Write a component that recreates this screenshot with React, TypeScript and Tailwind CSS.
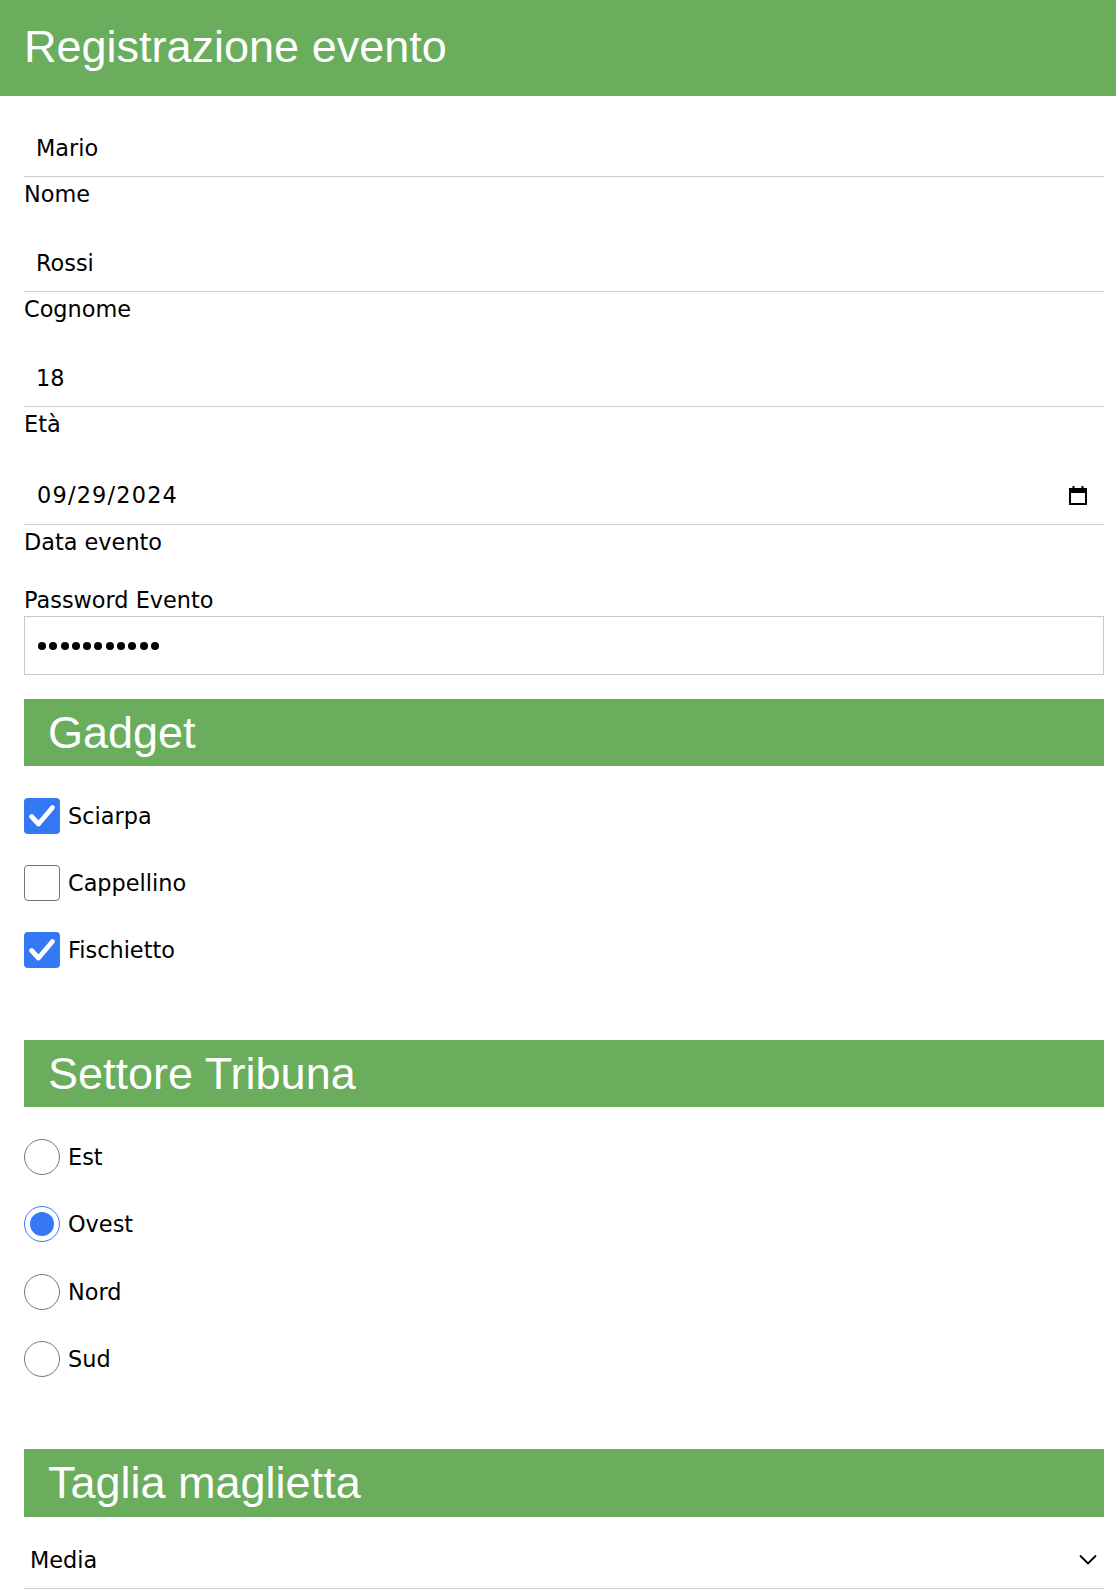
import React from "react";

const Field = ({ value, label, className = "" }: { value: string; label: string; className?: string }) => (
  <div className={"flex flex-col " + className}>
    <div className="h-[57px] border-b border-[#cccccc] flex items-center pl-3 leading-[26px]">{value}</div>
    <div className="mt-1 leading-[26px]">{label}</div>
  </div>
);

const SectionBar = ({ title, className = "" }: { title: string; className?: string }) => (
  <div className={"h-[67px] bg-[#69ad5d] flex items-center pl-6 " + className}>
    <h2 className="font-['Liberation_Sans',Arial,sans-serif] text-[45px] leading-none text-white">{title}</h2>
  </div>
);

const Checkbox = ({ checked, label }: { checked: boolean; label: string }) => (
  <div className="flex items-center h-[36px] gap-2">
    {checked ? (
      <div className="w-[36px] h-[36px] rounded-[4px] bg-[#3478f6] flex items-center justify-center">
        <svg width="36" height="36" viewBox="0 0 36 36">
          <path d="M7.5 18.5 L14.5 26 L28.5 9.5" fill="none" stroke="white" strokeWidth="4.8" strokeLinecap="round" strokeLinejoin="round" />
        </svg>
      </div>
    ) : (
      <div className="w-[36px] h-[36px] rounded-[4px] border-[1.5px] border-[#767676] bg-white" />
    )}
    <span className="leading-[26px]">{label}</span>
  </div>
);

const Radio = ({ checked, label }: { checked: boolean; label: string }) => (
  <div className="flex items-center h-[35px] gap-2">
    {checked ? (
      <div className="w-[36px] h-[36px] rounded-full border-[1.5px] border-[#3478f6] bg-white flex items-center justify-center">
        <div className="w-[24px] h-[24px] rounded-full bg-[#3478f6]" />
      </div>
    ) : (
      <div className="w-[36px] h-[36px] rounded-full border-[1.5px] border-[#767676] bg-white" />
    )}
    <span className="leading-[26px]">{label}</span>
  </div>
);

export default function App() {
  return (
    <div className="bg-white min-h-[1592px] font-['DejaVu_Sans',Verdana,sans-serif] text-[22.4px] text-black">
      <header className="h-[96px] bg-[#69ad5d] flex items-center pl-6 pb-[4px]">
        <h1 className="font-['Liberation_Sans',Arial,sans-serif] text-[45px] leading-none text-white">Registrazione evento</h1>
      </header>
      <main className="pl-6 pr-3 pt-6">
        <Field value="Mario" label="Nome" className="mb-[28px]" />
        <Field value="Rossi" label="Cognome" className="mb-[28px]" />
        <Field value="18" label="Età" className="mb-[28px]" />
        <div className="flex flex-col mb-[32px]">
          <div className="h-[60px] border-b border-[#cccccc] flex items-center pl-[13px] pr-[17px] leading-[26px]">
            <span className="flex-1 tracking-[1.2px]">09/29/2024</span>
            <svg width="18" height="20" viewBox="0 0 18 20">
              <rect x="1" y="4" width="16" height="15" fill="none" stroke="black" strokeWidth="2" />
              <rect x="1" y="4" width="16" height="4" fill="black" />
              <rect x="3.5" y="1" width="2" height="4" fill="black" />
              <rect x="12.5" y="1" width="2" height="4" fill="black" />
            </svg>
          </div>
          <div className="mt-1 leading-[26px]">Data evento</div>
        </div>
        <div className="flex flex-col">
          <div className="leading-[26px]">Password Evento</div>
          <div className="mt-[3px] h-[59px] border border-[#c8c8c8] flex items-center pl-[13px] gap-[3.3px]">
            {Array.from({ length: 11 }).map((_, i) => (
              <span key={i} className="w-[8px] h-[8px] rounded-full bg-black" />
            ))}
          </div>
        </div>
        <SectionBar title="Gadget" className="mt-[24px]" />
        <div className="mt-[32px] flex flex-col gap-[31px]">
          <Checkbox checked label="Sciarpa" />
          <Checkbox checked={false} label="Cappellino" />
          <Checkbox checked label="Fischietto" />
        </div>
        <SectionBar title="Settore Tribuna" className="mt-[72px]" />
        <div className="mt-[32px] flex flex-col gap-[32.5px]">
          <Radio checked={false} label="Est" />
          <Radio checked label="Ovest" />
          <Radio checked={false} label="Nord" />
          <Radio checked={false} label="Sud" />
        </div>
        <SectionBar title="Taglia maglietta" className="mt-[72px] h-[68px]" />
        <div className="mt-[15px] h-[57px] border-b border-[#cccccc] flex items-center pl-[6px] pr-[7px] leading-[26px]">
          <span className="flex-1">Media</span>
          <svg width="18" height="11" viewBox="0 0 18 11">
            <path d="M1 1.5 L9 9.5 L17 1.5" fill="none" stroke="black" strokeWidth="1.8" />
          </svg>
        </div>
      </main>
    </div>
  );
}
